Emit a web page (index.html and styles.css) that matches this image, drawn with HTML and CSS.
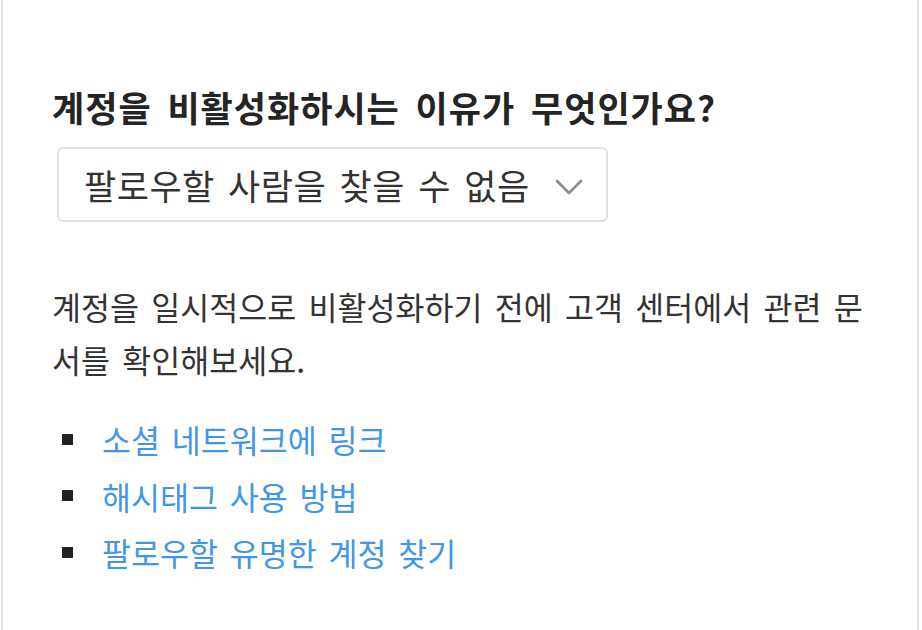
FILE: index.html
```html
<!DOCTYPE html>
<html lang="ko">
<head>
    <meta charset="UTF-8">
    <meta name="viewport" content="width=device-width, initial-scale=1.0">
    <title>계정 비활성화</title>
    <link rel="stylesheet" href="styles.css">
</head>
<body>

    <div class="panel">
        <h2 class="question">계정을 비활성화하시는 이유가 무엇인가요?</h2>

        <div class="select-box">
            <span class="select-value">팔로우할 사람을 찾을 수 없음</span>
            <svg class="chevron" width="28" height="16" viewBox="0 0 28 16">
                <polyline points="2,2 14,14 26,2" fill="none" stroke="#8c8c8c" stroke-width="2.6" stroke-linecap="round" stroke-linejoin="round"/>
            </svg>
        </div>

        <p class="help-text">계정을 일시적으로 비활성화하기 전에 고객 센터에서 관련 문서를 확인해보세요.</p>

        <ul class="help-links">
            <li><a href="#">소셜 네트워크에 링크</a></li>
            <li><a href="#">해시태그 사용 방법</a></li>
            <li><a href="#">팔로우할 유명한 계정 찾기</a></li>
        </ul>
    </div>

</body>
</html>
```

FILE: styles.css
```css
body {
    margin: 0;
    background: #fff;
    font-family: "Noto Sans CJK KR", "Noto Sans", sans-serif;
    color: #333;
}
.panel {
    margin-left: 1px;
    width: 918px;
    height: 630px;
    box-sizing: border-box;
    border-left: 2px solid #e2e2e2;
    border-right: 2px solid #e2e2e2;
    padding: 87px 53px 0 49px;
}
.question {
    margin: 0;
    font-size: 35px;
    line-height: 40px;
    font-weight: 700;
    letter-spacing: 1px;
    word-spacing: 5px;
    color: #242424;
}
.select-box {
    margin-top: 20px;
    margin-left: 5px;
    width: 551px;
    height: 75px;
    box-sizing: border-box;
    border: 2px solid #e0e0e0;
    border-radius: 6px;
    padding: 0 23px 0 25px;
    display: flex;
    align-items: center;
    justify-content: space-between;
}
.select-value {
    font-size: 35px;
    letter-spacing: 0.5px;
    word-spacing: 3px;
    color: #333;
}
.chevron {
    margin-top: 4px;
}
.help-text {
    margin: 58px 0 0;
    font-size: 31.5px;
    line-height: 53px;
    word-spacing: 3.5px;
    color: #333;
}
.help-links {
    margin: 25px 0 0;
    padding: 0;
    list-style: none;
}
.help-links li {
    display: flex;
    align-items: center;
    font-size: 31.5px;
    line-height: 56.5px;
    word-spacing: 3px;
}
.help-links li::before {
    content: "";
    flex: none;
    width: 11px;
    height: 11px;
    background: #222;
    margin: 0 29px 0 10px;
}
.help-links a {
    color: #4296e8;
    text-decoration: none;
}
```
